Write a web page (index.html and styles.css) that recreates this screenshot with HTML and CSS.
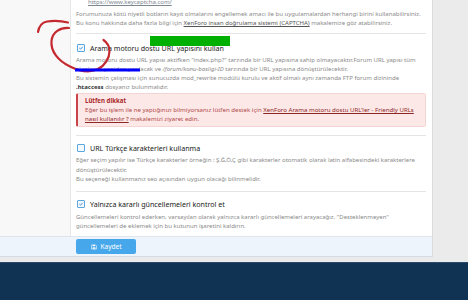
FILE: index.html
```html
<!DOCTYPE html>
<html lang="tr">
<head>
<meta charset="UTF-8">
<meta name="viewport" content="width=device-width, initial-scale=1.0">
<title>Seçenekler</title>
<link rel="stylesheet" href="styles.css">
</head>
<body>
<div class="panel">
    <div class="form-body">
        <div class="label-col"></div>
        <div class="input-col">
            <div class="row row-top">
                <div class="top-link"><a href="#">https://www.keycaptcha.com/</a></div>
                <div class="desc">
                    Forumunuza kötü niyetli botların kayıt olmalarını engellemek amacı ile bu uygulamalardan herhangi birini kullanabilirsiniz.<br>
                    Bu konu hakkında daha fazla bilgi için <a href="#">XenForo insan doğrulama sistemi (CAPTCHA)</a> makalemize göz atabilirsiniz.
                </div>
            </div>

            <div class="row row-seo">
                <label class="check">
                    <span class="box checked"><svg viewBox="0 0 8 8"><path d="M1.8 4.1 L3.4 5.6 L6.3 2.4"/></svg></span>
                    Arama motoru dostu URL yapısını kullan
                </label>
                <div class="desc">
                    Arama motoru dostu URL yapısı aktifken "index.php?" tarzında bir URL yapısına sahip olmayacaktır.Forum URL yapısı tüm<br>
                    alanlarda yeniden yazılacak ve <i>/forum/konu-basligi-ID</i> tarzında bir URL yapısına dönüştürülecektir.<br>
                    Bu sistemin çalışması için sunucuzda mod_rewrite modülü kurulu ve aktif olmalı aynı zamanda FTP forum dizininde<br>
                    <b>.htaccess</b> dosyanız bulunmalıdır.
                </div>
                <div class="alert">
                    <div class="alert-title">Lütfen dikkat</div>
                    Eğer bu işlem ile ne yaptığınızı bilmiyorsanız lütfen destek için <a href="#">XenForo Arama motoru dostu URL'ler - Friendly URLs<br>nasıl kullanılır ?</a> makalemizi ziyaret edin.
                </div>
            </div>

            <div class="row row-tr">
                <label class="check">
                    <span class="box"></span>
                    URL Türkçe karakterleri kullanma
                </label>
                <div class="desc">
                    Eğer seçim yapılır ise Türkçe karakterler örneğin : Ş,Ğ,Ö,Ç gibi karakterler otomatik olarak latin alfabesindeki karakterlere<br>
                    dönüştürülecektir.<br>
                    Bu seçeneği kullanmanız seo açısından uygun olacağı bilinmelidir.
                </div>
            </div>

            <div class="row row-stable">
                <label class="check">
                    <span class="box checked"><svg viewBox="0 0 8 8"><path d="M1.8 4.1 L3.4 5.6 L6.3 2.4"/></svg></span>
                    Yalnızca kararlı güncellemeleri kontrol et
                </label>
                <div class="desc">
                    Güncellemeleri kontrol ederken, varsayılan olarak yalnızca kararlı güncellemeleri arayacağız. "Desteklenmeyen"<br>
                    güncellemeleri de eklemek için bu kutunun işaretini kaldırın.
                </div>
            </div>
        </div>
    </div>
    <div class="submit-row">
        <button type="submit" class="button">
            <svg class="save-icon" viewBox="0 0 10 10"><path d="M1 1.5 h6.5 l1.5 1.5 v5.5 h-8 z" fill="none" stroke="#fff" stroke-width="1"/><rect x="3" y="1.5" width="3.5" height="2.2" fill="#fff"/><rect x="2.8" y="5.6" width="4.4" height="2.4" fill="#fff"/></svg>
            Kaydet
        </button>
    </div>
</div>
<div class="page-footer"></div>

<!-- hand-drawn mark around the first option -->
<svg class="scribble" viewBox="0 0 468 300">
    <path class="mark" d="M38 32 C39 26 42 22.5 47 21.5 C54 20.5 62 21 68 22.5"/>
    <path class="mark" d="M69 28 C60 27.5 52.5 32 51.5 41 C50.5 51 58 61 70 66.5 C80 71.5 90 73 98 69 C105 65.5 109.5 58 109.5 51 C109.5 46 107 42.5 103.5 40"/>
    <rect class="probe" x="150" y="36" width="80" height="10"/>
    <line class="probe-line" x1="75" y1="70" x2="140" y2="70"/>
</svg>
</body>
</html>
```

FILE: styles.css
```css
body {
    margin: 0;
    background-color: #ebebeb;
    font-family: "Noto Sans", "Open Sans", sans-serif;
    color: #141414;
    position: relative;
    width: 468px;
    height: 300px;
    overflow: hidden;
}

.panel {
    width: 433px;
    background-color: #fff;
    border-right: 1px solid #dcdcdc;
    box-sizing: border-box;
}

.form-body {
    display: flex;
    height: 236px;
    overflow: hidden;
}

.label-col {
    width: 71px;
    flex-shrink: 0;
    background-color: #f8f8f8;
    border-right: 1px solid #e6e6e6;
    box-sizing: border-box;
}

.input-col {
    flex: 1;
    padding: 0 6px 0 5px;
}

.row {
    border-bottom: 1px solid #e5e5e5;
}

.row:last-child {
    border-bottom: none;
}

.row-top {
    margin-top: -2px;
    padding-bottom: 5px;
}

.top-link {
    font-size: 6px;
    line-height: 9px;
    padding-left: 12px;
    margin-bottom: 3px;
}

.top-link a {
    color: #7c8792;
}

.desc {
    font-size: 6px;
    line-height: 9px;
    color: #8a8a8a;
    white-space: nowrap;
}

.desc a {
    color: #555;
}

.desc i {
    font-style: italic;
}

.desc b {
    color: #333;
}

.check {
    display: flex;
    align-items: center;
    gap: 5px;
    font-size: 7.1px;
    line-height: 12px;
    padding-left: 1px;
    color: #1a1a1a;
}

.box {
    width: 6px;
    height: 6px;
    border: 1px solid #5ba5dd;
    border-radius: 1px;
    background-color: #f4f9fd;
    display: flex;
}

.box svg {
    width: 6px;
    height: 6px;
    fill: none;
    stroke: #2f86cf;
    stroke-width: 1.2;
}

.row-seo {
    padding-top: 8px;
    padding-bottom: 8px;
}

.row-seo .desc {
    margin-top: 2px;
}

.alert {
    margin-top: 1px;
    background-color: #fde8e8;
    border: 1px solid #f5d4d4;
    border-left: 2px solid #c9444a;
    border-radius: 2px;
    padding: 2px 4px 3px 7px;
    font-size: 6.1px;
    line-height: 9px;
    color: #b04a4a;
    white-space: nowrap;
}

.alert-title {
    font-weight: bold;
    color: #a82828;
}

.alert a {
    color: #8f2626;
}

.row-tr {
    padding-top: 6px;
    padding-bottom: 6px;
}

.row-tr .desc {
    margin-top: 2px;
    line-height: 9.5px;
}

.row-stable {
    padding-top: 6px;
}

.row-stable .desc {
    margin-top: 3px;
}

.submit-row {
    height: 21px;
    background-color: #edf4fb;
    border-top: 1px solid #dde5ee;
    border-bottom: 1px solid #d5dbe2;
    box-sizing: border-box;
    display: flex;
    align-items: center;
    padding-left: 76px;
}

.button {
    width: 60px;
    height: 15px;
    background-color: #47a7eb;
    color: #fff;
    border: none;
    border-radius: 2px;
    font-family: inherit;
    font-size: 6.5px;
    display: flex;
    align-items: center;
    justify-content: center;
    gap: 4px;
    padding: 0;
}

.save-icon {
    width: 6px;
    height: 6px;
}

.page-footer {
    margin-top: 5px;
    height: 38px;
    background-color: #113353;
    border-top: 1px solid #2c4a6a;
}

.scribble {
    position: absolute;
    left: 0;
    top: 0;
    width: 468px;
    height: 300px;
    z-index: 5;
    pointer-events: none;
}

.scribble .mark {
    fill: none;
    stroke: #c42a30;
    stroke-width: 2.2;
    stroke-linecap: round;
    stroke-linejoin: round;
}

.scribble .probe {
    fill: #00b000;
}

.scribble .probe-line {
    stroke: #0000ff;
    stroke-width: 3;
}
```
